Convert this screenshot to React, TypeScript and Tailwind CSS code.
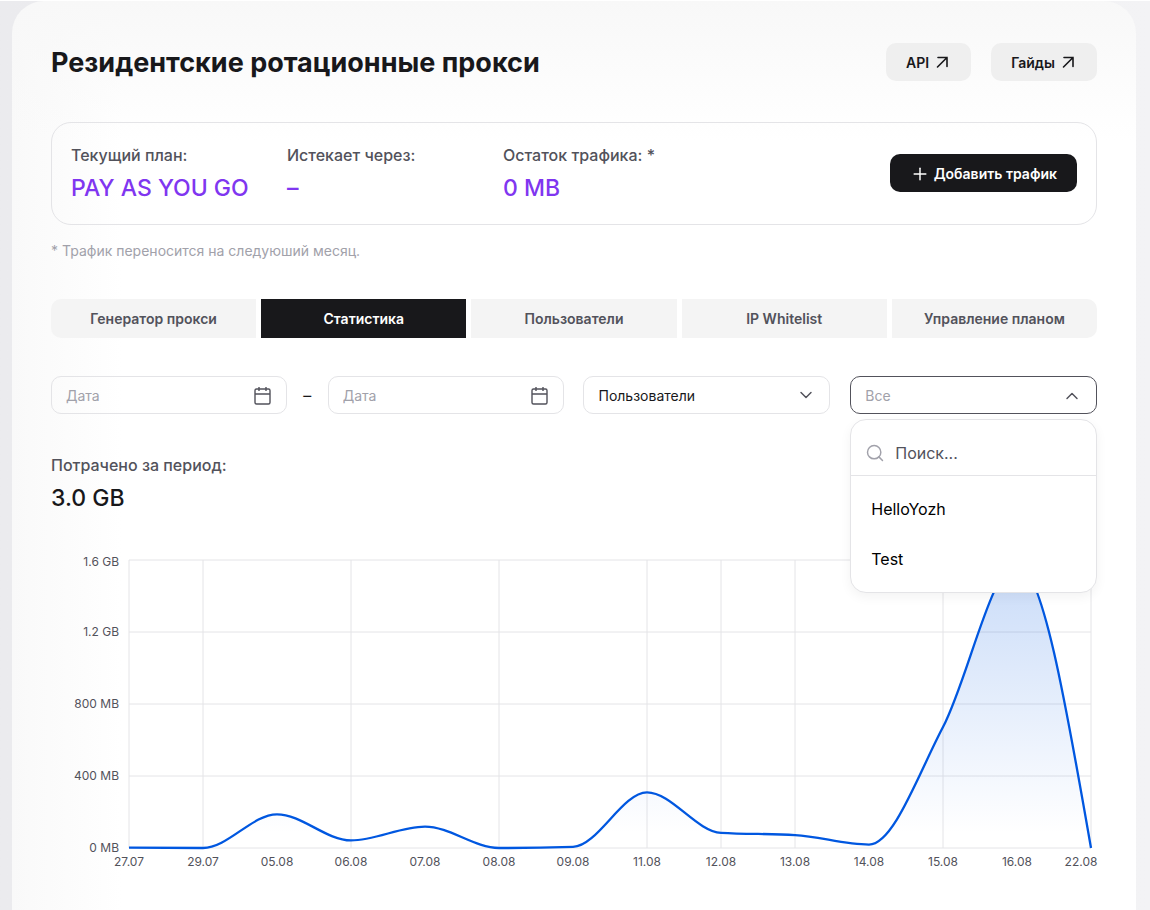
import { useState } from "react";
import { ChevronDown, ChevronUp, Plus, Search } from "lucide-react";
import clsx from "clsx";

const tabs = [
  "Генератор прокси",
  "Статистика",
  "Пользователи",
  "IP Whitelist",
  "Управление планом",
];

const plan = [
  { label: "Текущий план:", value: "PAY AS YOU GO" },
  { label: "Истекает через:", value: "–" },
  { label: "Остаток трафика: *", value: "0 MB" },
];

// traffic per day, MB
const traffic = [
  { day: "27.07", mb: 2 },
  { day: "29.07", mb: 0 },
  { day: "05.08", mb: 187 },
  { day: "06.08", mb: 42 },
  { day: "07.08", mb: 119 },
  { day: "08.08", mb: 0 },
  { day: "09.08", mb: 6 },
  { day: "11.08", mb: 309 },
  { day: "12.08", mb: 84 },
  { day: "13.08", mb: 72 },
  { day: "14.08", mb: 19 },
  { day: "15.08", mb: 672 },
  { day: "16.08", mb: 1580 },
  { day: "22.08", mb: 0 },
];

const yTicks = [
  { mb: 1600, label: "1.6 GB" },
  { mb: 1200, label: "1.2 GB" },
  { mb: 800, label: "800 MB" },
  { mb: 400, label: "400 MB" },
  { mb: 0, label: "0 MB" },
];

// days that get a vertical grid line
const gridDays = [0, 1, 3, 5, 7, 8, 9, 11, 13];

const LEFT = 78;
const STEP = 74;
const TOP = 10;
const PLOT_HEIGHT = 288;
const BOTTOM = TOP + PLOT_HEIGHT;
const RIGHT = LEFT + STEP * (traffic.length - 1);

const xAt = (i: number) => LEFT + i * STEP;
const yAt = (mb: number) => BOTTOM - (mb / 1600) * PLOT_HEIGHT;

// monotone cubic interpolation, so the line never overshoots a point
function linePath(points: { x: number; y: number }[]) {
  const n = points.length;
  const slopes = points.slice(1).map((p, i) => (p.y - points[i].y) / (p.x - points[i].x));
  const tangents = points.map((_, i) => {
    if (i === 0 || i === n - 1) return 0;
    const a = slopes[i - 1];
    const b = slopes[i];
    if (a * b <= 0) return 0;
    return Math.sign(a) * 2 * Math.min(Math.abs(a), Math.abs(b), Math.abs(a + b) / 4);
  });
  tangents[0] = (3 * slopes[0] - tangents[1]) / 2;
  tangents[n - 1] = (3 * slopes[n - 2] - tangents[n - 2]) / 2;

  let d = `M${points[0].x},${points[0].y}`;
  for (let i = 1; i < n; i++) {
    const a = points[i - 1];
    const b = points[i];
    const dx = (b.x - a.x) / 3;
    d += `C${a.x + dx},${a.y + dx * tangents[i - 1]},${b.x - dx},${b.y - dx * tangents[i]},${b.x},${b.y}`;
  }
  return d;
}

function TrafficChart() {
  const line = linePath(traffic.map((t, i) => ({ x: xAt(i), y: yAt(t.mb) })));

  return (
    <svg
      viewBox="0 0 1046 330"
      className="w-full overflow-visible"
      role="img"
      aria-label="График трафика"
    >
      <defs>
        <linearGradient id="traffic-fill" x1="0" y1="0" x2="0" y2="1">
          <stop offset="5%" stopColor="#0057e0" stopOpacity="0.2" />
          <stop offset="95%" stopColor="#0057e0" stopOpacity="0" />
        </linearGradient>
      </defs>
      <g stroke="#e4e4e7">
        {yTicks.map((t) => (
          <line key={t.mb} x1={LEFT} x2={RIGHT} y1={yAt(t.mb)} y2={yAt(t.mb)} />
        ))}
        {gridDays.map((i) => (
          <line key={i} x1={xAt(i)} x2={xAt(i)} y1={TOP} y2={BOTTOM} />
        ))}
      </g>
      <path d={`${line}L${RIGHT},${BOTTOM}L${LEFT},${BOTTOM}Z`} fill="url(#traffic-fill)" />
      <path d={line} fill="none" stroke="#0057e0" strokeWidth="2.3" />
      <g className="fill-[#52525b] text-xs">
        {yTicks.map((t) => (
          <text key={t.mb} x={LEFT - 10} y={Math.max(yAt(t.mb), TOP + 2) + 4} textAnchor="end">
            {t.label}
          </text>
        ))}
        {traffic.map((t, i) => (
          <text key={t.day} x={Math.min(xAt(i), 1030)} y={BOTTOM + 18} textAnchor="middle">
            {t.day}
          </text>
        ))}
      </g>
    </svg>
  );
}

function ArrowIcon() {
  return (
    <svg viewBox="0 0 18 18" className="size-[18px]" fill="none" stroke="currentColor" strokeWidth="1.6">
      <path d="M5 3.5h9V12.5M14 3.5L4.5 13" strokeLinecap="round" />
    </svg>
  );
}

function CalendarIcon() {
  return (
    <svg viewBox="0 0 20 20" className="size-5 text-[#52525b]" fill="none" stroke="currentColor" strokeWidth="1.4">
      <rect x="3" y="3" width="15" height="15" rx="1.5" />
      <path d="M3 8h15M7 1v4M14 1v4" />
    </svg>
  );
}

function LinkButton({ href, children }: { href: string; children: string }) {
  return (
    <a
      href={href}
      className="flex h-[38px] items-center gap-1 rounded-[10px] bg-[#efefef] px-5 pt-0.5 text-sm font-semibold text-[#18181b]"
    >
      {children}
      <ArrowIcon />
    </a>
  );
}

function DateField({ label }: { label: string }) {
  return (
    <div className="flex h-[38px] min-w-0 flex-1 items-center rounded-[10px] border border-[#e4e4e7] px-3.5 pt-0.5">
      <input
        type="text"
        aria-label={label}
        placeholder="Дата"
        className="w-full min-w-0 bg-transparent text-sm outline-none placeholder:text-[#a1a1aa]"
      />
      <button type="button" aria-label="Открыть календарь">
        <CalendarIcon />
      </button>
    </div>
  );
}

function UserPicker() {
  const [open, setOpen] = useState(true);
  const [user, setUser] = useState("");
  const [query, setQuery] = useState("");
  const users = ["HelloYozh", "Test"].filter((u) =>
    u.toLowerCase().includes(query.toLowerCase())
  );

  return (
    <div className="relative">
      <button
        type="button"
        aria-haspopup="listbox"
        aria-expanded={open}
        onClick={() => setOpen(!open)}
        className={clsx(
          "flex h-[38px] w-full items-center justify-between rounded-[10px] border px-3.5 pt-0.5 text-sm",
          open ? "border-[#52525b]" : "border-[#e4e4e7]",
          user ? "text-[#18181b]" : "text-[#a1a1aa]"
        )}
      >
        {user || "Все"}
        {open ? (
          <ChevronUp className="size-5 text-[#52525b]" strokeWidth={1.75} />
        ) : (
          <ChevronDown className="size-5 text-[#52525b]" strokeWidth={1.75} />
        )}
      </button>
      {open && (
        <div className="absolute inset-x-0 top-full z-10 mt-[5px] rounded-2xl border border-[#e4e4e7] bg-white shadow-[0_4px_12px_rgba(0,0,0,0.05)]">
          <label className="flex h-14 items-center gap-2.5 border-b border-[#e4e4e7] px-3.5 pt-2.5">
            <Search className="size-5 shrink-0 text-[#a1a1aa]" strokeWidth={1.75} />
            <input
              type="text"
              aria-label="Поиск"
              placeholder="Поиск..."
              value={query}
              onChange={(e) => setQuery(e.target.value)}
              className="w-full min-w-0 text-base outline-none placeholder:text-[#52525b]"
            />
          </label>
          <ul className="py-2">
            {users.map((u) => (
              <li key={u}>
                <button
                  type="button"
                  onClick={() => {
                    setUser(u);
                    setOpen(false);
                  }}
                  className="h-[50px] w-full px-5 text-left text-base text-black"
                >
                  {u}
                </button>
              </li>
            ))}
          </ul>
        </div>
      )}
    </div>
  );
}

export default function App() {
  const [tab, setTab] = useState("Статистика");

  return (
    <div className="min-h-screen border-t border-white bg-linear-to-r from-[#ebebee] to-[#f3f3f5] pr-3.5 pl-3 font-['Inter',sans-serif] text-[#18181b]">
      <main className="min-h-[909px] rounded-t-[32px] bg-white bg-[linear-gradient(to_bottom,#f8f8f8,transparent_140px),linear-gradient(to_right,#f9f9f9,transparent_110px)] px-[39px] pt-[42px]">
        <header className="flex h-[38px] items-center justify-between">
          <h1 className="pt-0.5 text-[27px] font-bold">Резидентские ротационные прокси</h1>
          <nav className="flex gap-5">
            <LinkButton href="#api">API</LinkButton>
            <LinkButton href="#guides">Гайды</LinkButton>
          </nav>
        </header>

        <section className="mt-[41px] flex h-[103px] items-center justify-between rounded-[20px] border border-[#e4e4e7] px-[19px] pb-px">
          <dl className="flex">
            {plan.map((p) => (
              <div key={p.label} className="w-[216px]">
                <dt className="text-base font-medium text-[#52525b]">{p.label}</dt>
                <dd className="mt-[5px] text-[23px] leading-8 font-medium text-[#8036f0]">{p.value}</dd>
              </div>
            ))}
          </dl>
          <button
            type="button"
            className="flex h-[38px] items-center gap-1 rounded-[10px] bg-[#18181b] px-5 pt-0.5 text-sm font-semibold text-white"
          >
            <Plus className="size-5" strokeWidth={1.75} />
            Добавить трафик
          </button>
        </section>
        <p className="mt-4 text-sm text-[#a1a1aa]">* Трафик переносится на следуюший месяц.</p>

        <div role="tablist" className="mt-[38px] grid grid-cols-5 gap-[5px] overflow-hidden rounded-[10px]">
          {tabs.map((t) => (
            <button
              key={t}
              type="button"
              role="tab"
              aria-selected={t === tab}
              onClick={() => setTab(t)}
              className={clsx(
                "h-[39px] text-sm font-semibold",
                t === tab ? "bg-[#18181b] text-white" : "bg-[#f4f4f4] text-[#52525b]"
              )}
            >
              {t}
            </button>
          ))}
        </div>

        <div className="mt-[38px] grid grid-cols-[513fr_247fr_247fr] gap-x-5">
          <div className="flex items-center">
            <DateField label="Дата начала" />
            <span className="w-[41px] text-center text-base">–</span>
            <DateField label="Дата окончания" />
          </div>
          <div className="relative">
            <select
              aria-label="Тип отчёта"
              className="h-[38px] w-full appearance-none rounded-[10px] border border-[#e4e4e7] px-3.5 pt-0.5 text-sm"
            >
              <option>Пользователи</option>
            </select>
            <ChevronDown
              className="pointer-events-none absolute inset-y-0 right-3.5 my-auto size-5 text-[#52525b]"
              strokeWidth={1.75}
            />
          </div>
          <UserPicker />
        </div>

        <p className="mt-[39px] text-base font-medium text-[#52525b]">Потрачено за период:</p>
        <p className="mt-[5px] mb-9 text-[23px] leading-8 font-medium">3.0 GB</p>
        <TrafficChart />
      </main>
    </div>
  );
}
